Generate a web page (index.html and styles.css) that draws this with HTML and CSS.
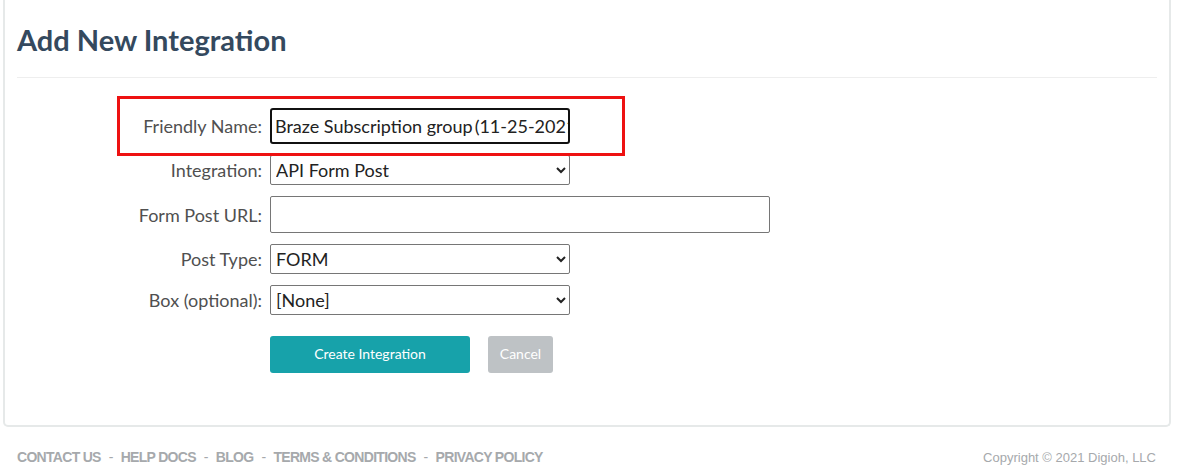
FILE: index.html
```html
<!DOCTYPE html>
<html>
<head>
<meta charset="utf-8">
<link rel="stylesheet" href="styles.css">
</head>
<body>
<div class="card">
  <h1 class="title">Add New Integration</h1>
  <div class="rule"></div>
  <form class="form">
    <div class="highlight"></div>
    <label class="label">Friendly Name:</label>
    <div class="field-focus"><span>Braze Subscription group</span><span class="caret"></span><span>(11-25-2021)</span></div>

    <label class="label">Integration:</label>
    <select class="select"><option>API Form Post</option></select>

    <label class="label">Form Post URL:</label>
    <input class="text-input wide" type="text" value="">

    <label class="label">Post Type:</label>
    <select class="select"><option>FORM</option></select>

    <label class="label">Box (optional):</label>
    <select class="select"><option>[None]</option></select>

    <div></div>
    <div class="actions">
      <button type="button" class="btn btn-primary">Create Integration</button>
      <button type="button" class="btn btn-muted">Cancel</button>
    </div>
  </form>
</div>
<footer class="footer">
  <div class="links">
    <a>CONTACT US</a><span class="sep">-</span><a>HELP DOCS</a><span class="sep">-</span><a>BLOG</a><span class="sep">-</span><a>TERMS &amp; CONDITIONS</a><span class="sep">-</span><a>PRIVACY POLICY</a>
  </div>
  <div class="copy">Copyright © 2021 Digioh, LLC</div>
</footer>
</body>
</html>
```
FILE: styles.css
```css
html, body {
  margin: 0;
  padding: 0;
  background: #ffffff;
}
body {
  font-family: Lato, "Liberation Sans", sans-serif;
  width: 1184px;
  height: 471px;
  overflow: hidden;
}
.card {
  margin-left: 3px;
  width: 1140px;
  border: 2px solid #e6e9e9;
  border-top: none;
  border-radius: 0 0 5px 5px;
  padding: 22px 12px 0 12px;
  height: 403px;
  box-sizing: content-box;
}
.title {
  margin: 0;
  font-size: 29px;
  line-height: 36px;
  font-weight: 700;
  color: #34495e;
}
.rule {
  height: 1px;
  background: #eeeeee;
  margin-top: 19px;
}
.form {
  position: relative;
  display: grid;
  grid-template-columns: 245px 1fr;
  column-gap: 8px;
  row-gap: 11px;
  margin-top: 30px;
  align-items: center;
}
.highlight {
  position: absolute;
  left: 100px;
  top: -12px;
  width: 502px;
  height: 54px;
  border: 3px solid #ee1111;
  pointer-events: none;
}
.label {
  text-align: right;
  font-size: 18px;
  color: #505050;
}
.field-focus {
  width: 300px;
  height: 36px;
  box-sizing: border-box;
  border: 2px solid #111111;
  border-radius: 3px;
  padding: 0 3px;
  font-size: 18px;
  color: #222222;
  white-space: nowrap;
  overflow: hidden;
  display: flex;
  align-items: center;
}
.caret {
  display: inline-block;
  width: 1px;
  height: 21px;
  background: #000;
  margin: 0 1px 0 1px;
}
.select {
  width: 300px;
  height: 30px;
  box-sizing: border-box;
  border: 1px solid #767676;
  border-radius: 2px;
  font-family: Lato, "Liberation Sans", sans-serif;
  font-size: 18px;
  color: #222222;
  background: #ffffff;
  padding: 0 1px;
}
.text-input {
  height: 37px;
  box-sizing: border-box;
  border: 1px solid #767676;
  border-radius: 2px;
  font-family: Lato, "Liberation Sans", sans-serif;
  font-size: 18px;
  padding: 0 4px;
}
.wide {
  width: 500px;
}
.actions {
  display: flex;
  gap: 18px;
  margin-top: 10px;
}
.btn {
  height: 37px;
  border: none;
  border-radius: 3px;
  font-family: Lato, "Liberation Sans", sans-serif;
  font-size: 14px;
  color: #ffffff;
  padding: 0 0 3px 0;
}
.btn-primary {
  width: 200px;
  background: #17a2aa;
}
.btn-muted {
  width: 65px;
  background: #bec2c5;
}
.footer {
  display: flex;
  justify-content: space-between;
  align-items: center;
  padding: 0 28px 0 17px;
  margin-top: 22px;
  font-family: "Liberation Sans", Arial, sans-serif;
  color: #a6a9ac;
}
.links {
  font-size: 14px;
  letter-spacing: -0.7px;
  font-weight: 600;
}
.sep {
  margin: 0 8px;
  font-weight: 400;
}
.copy {
  font-size: 13px;
  letter-spacing: 0;
}
```
